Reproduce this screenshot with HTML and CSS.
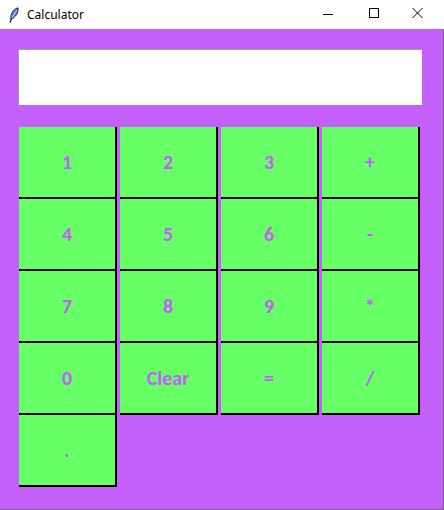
FILE: index.html
```html
<!DOCTYPE html>
<html>
<head>
<meta charset="utf-8">
<link rel="stylesheet" href="styles.css">
</head>
<body>
<div class="window">
  <div class="titlebar">
    <svg class="app-icon" width="16" height="16" viewBox="0 0 16 16">
      <path d="M4 15.5 L6.5 9" stroke="#1a1a1a" stroke-width="1.3" fill="none"/>
      <path d="M5 12 C4.2 8 6.5 2.5 12 0.8 C12.6 5.5 9.8 10.5 5 12 Z" fill="#5f86cf" stroke="#1b2a4a" stroke-width="1"/>
      <path d="M6 10.8 L10.8 3" stroke="#d3e0f5" stroke-width="0.8"/>
    </svg>
    <span class="title">Calculator</span>
    <div class="controls">
      <svg class="ctl" width="46" height="29" viewBox="0 0 46 29"><path d="M18 14.5 H28" stroke="#000" stroke-width="1"/></svg>
      <svg class="ctl" width="46" height="29" viewBox="0 0 46 29"><rect x="18.5" y="8.5" width="9" height="9" fill="none" stroke="#000" stroke-width="1"/></svg>
      <svg class="ctl" width="46" height="29" viewBox="0 0 46 29"><path d="M15.5 8 L25.5 18 M25.5 8 L15.5 18" stroke="#000" stroke-width="1"/></svg>
    </div>
  </div>
  <div class="main">
    <div class="entry"></div>
    <div class="keys">
      <div class="key">1</div><div class="key">2</div><div class="key">3</div><div class="key">+</div>
      <div class="key">4</div><div class="key">5</div><div class="key">6</div><div class="key">-</div>
      <div class="key">7</div><div class="key">8</div><div class="key">9</div><div class="key">*</div>
      <div class="key">0</div><div class="key">Clear</div><div class="key">=</div><div class="key">/</div>
      <div class="key">.</div>
    </div>
  </div>
</div>
</body>
</html>
```
FILE: styles.css
```css
html, body {
  margin: 0;
  padding: 0;
  background: #ffffff;
}
.window {
  width: 444px;
  height: 510px;
  display: flex;
  flex-direction: column;
}
.titlebar {
  height: 29px;
  background: #ffffff;
  display: flex;
  align-items: center;
  font-family: "Noto Sans", "Open Sans", sans-serif;
  font-size: 12px;
  color: #000;
}
.app-icon {
  margin-left: 6px;
  margin-right: 5px;
}
.title {
  line-height: 29px;
}
.controls {
  margin-left: auto;
  display: flex;
  margin-right: 1px;
}
.ctl {
  display: block;
}
.main {
  flex: 1;
  background: #c260f9;
  border-right: 1px solid #6c6c6c;
  border-bottom: 1px solid #6c6c6c;
  padding-top: 20px;
  box-sizing: border-box;
}
.entry {
  margin-left: 18px;
  width: 404px;
  height: 56px;
  box-sizing: border-box;
  background: #ffffff;
  border-top: 1px solid #a0a0a0;
  border-left: 1px solid #a0a0a0;
}
.keys {
  margin-top: 22px;
  margin-left: 19px;
  display: grid;
  grid-template-columns: repeat(4, 98px);
  grid-auto-rows: 72px;
  column-gap: 3px;
}
.key {
  background: #66ff66;
  border-right: 2px solid #000;
  border-bottom: 2px solid #000;
  box-sizing: border-box;
  display: flex;
  align-items: center;
  justify-content: center;
  color: #c260f9;
  font-family: Carlito, Lato, "Open Sans", sans-serif;
  font-weight: bold;
  font-size: 20px;
}
```
